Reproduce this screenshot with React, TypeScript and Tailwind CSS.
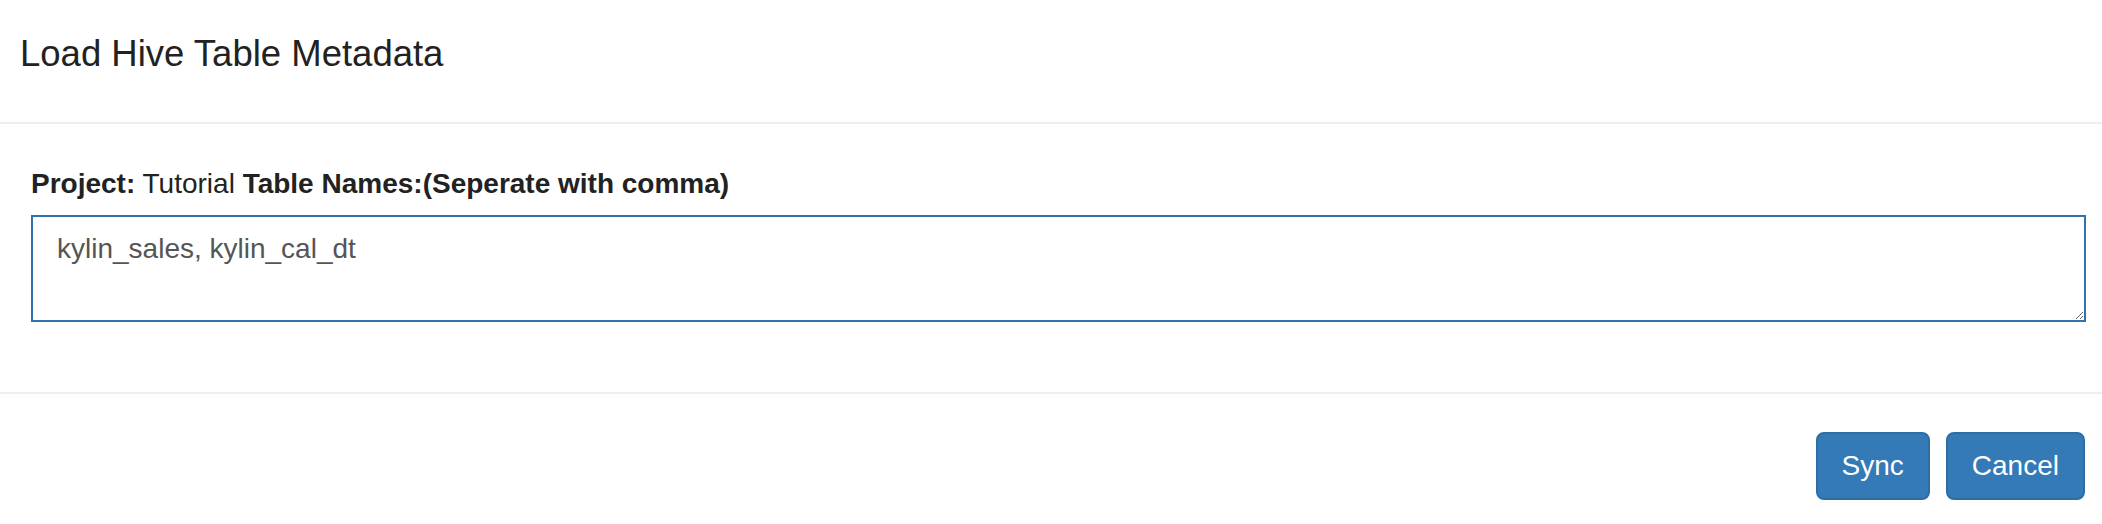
import { useEffect, useRef } from "react";

const LoadHiveModal = () => {
  const areaRef = useRef<HTMLTextAreaElement>(null);

  useEffect(() => {
    const el = areaRef.current;
    if (el) {
      el.focus();
      el.setSelectionRange(el.value.length, el.value.length);
    }
  }, []);

  return (
    <div className="w-[2102px] h-[524px] bg-white text-[#333] font-['Liberation_Sans',Arial,sans-serif]">
      <div className="border-b-2 border-[#eeeeee] pt-[34px] pb-[48px] pl-[20px]">
        <h4 className="text-[36.5px] leading-[40px] font-normal text-[#222]">
          Load Hive Table Metadata
        </h4>
      </div>

      <div className="pt-[40px] pb-[70px] pl-[31px] pr-[16px]">
        <label className="block text-[28px] leading-[40px] mb-[11px] text-[#222]">
          <b>Project:</b> Tutorial <b>Table Names:(Seperate with comma)</b>
        </label>
        <textarea
          ref={areaRef}
          defaultValue="kylin_sales, kylin_cal_dt"
          className="block w-full h-[107px] border-2 border-[#3072ab] outline-none px-[24px] pt-[12px] text-[28px] leading-[40px] text-[#555] caret-[#222] bg-white"
        />
      </div>

      <div className="border-t-2 border-[#eeeeee] pt-[38px] pr-[17px] flex justify-end gap-[16px]">
        <button className="h-[68px] px-[24px] text-[28px] leading-[40px] text-white bg-[#337ab7] border-2 border-[#2e6da4] rounded-[8px]">
          Sync
        </button>
        <button className="h-[68px] px-[24px] text-[28px] leading-[40px] text-white bg-[#337ab7] border-2 border-[#2e6da4] rounded-[8px]">
          Cancel
        </button>
      </div>
    </div>
  );
};

export default function App() {
  return <LoadHiveModal />;
}
